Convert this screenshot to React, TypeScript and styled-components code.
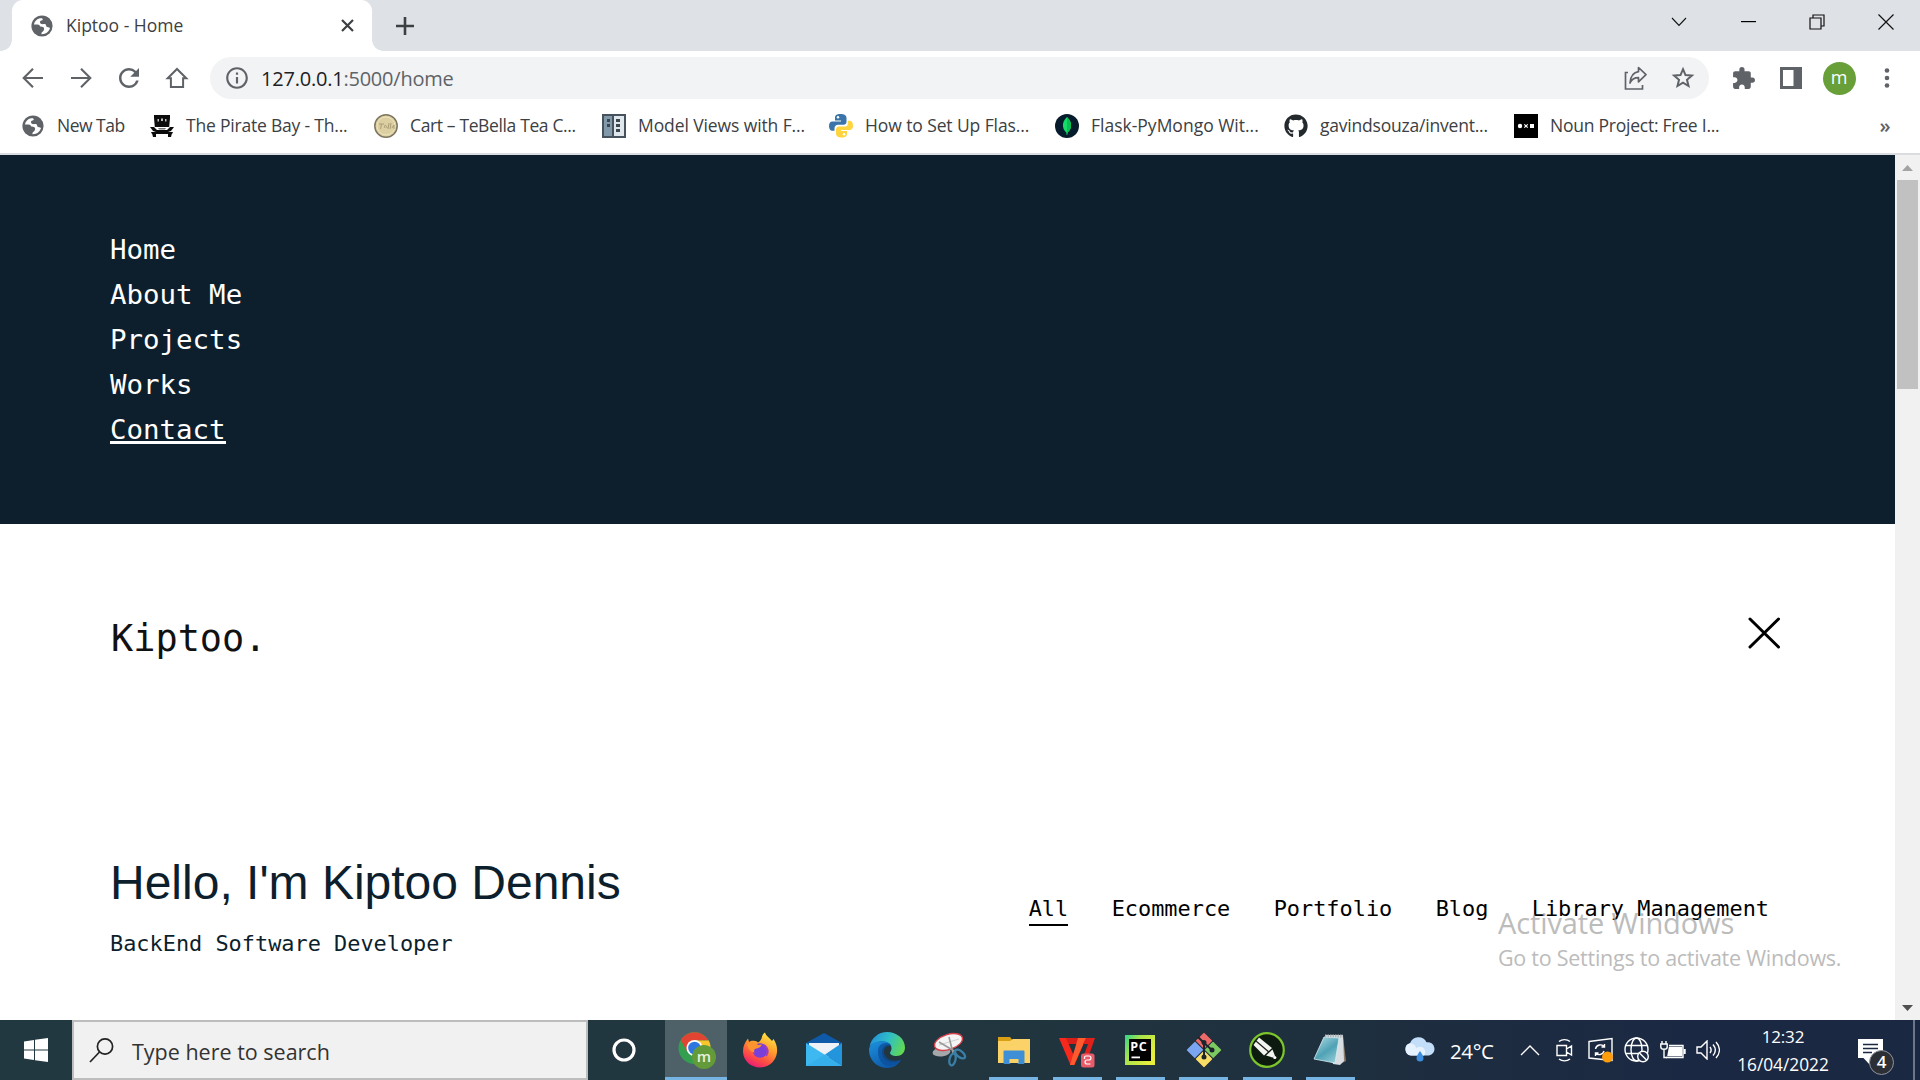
import React from 'react';
import styled, { createGlobalStyle } from 'styled-components';
import { MdRefresh, MdInfoOutline, MdExtension } from 'react-icons/md';
import { FaGithub } from 'react-icons/fa';

const UI = '"Open Sans", "Noto Sans", sans-serif';
const MONO = '"DejaVu Sans Mono", "Liberation Mono", monospace';

const GlobalStyle = createGlobalStyle`
  * { box-sizing: border-box; }
  body { margin: 0; background: #fff; font-family: ${UI}; }
  svg { display: block; flex: none; }
`;

const Screen = styled.div`
  width: 1920px;
  height: 1080px;
  display: flex;
  flex-direction: column;
  overflow: hidden;
  position: relative;
`;

const Label = styled.span<{ $size: number; $ls?: number; $color?: string }>`
  font-size: ${(p) => p.$size}px;
  letter-spacing: ${(p) => p.$ls ?? 0}px;
  color: ${(p) => p.$color ?? '#3c4043'};
  white-space: nowrap;
  line-height: 1.3;
`;

/* ---------- browser chrome ---------- */
const TabStrip = styled.div`
  height: 51px;
  flex: none;
  background: #dee1e6;
  display: flex;
  padding-left: 12px;
`;
const Tab = styled.div`
  width: 360px;
  background: #fff;
  border-radius: 11px 11px 0 0;
  display: flex;
  align-items: center;
  padding: 0 18px;
  position: relative;
  &::before, &::after {
    content: '';
    position: absolute;
    bottom: 0;
    width: 11px;
    height: 11px;
  }
  &::before { left: -11px; background: radial-gradient(circle at 0 0, transparent 10.5px, #fff 11px); }
  &::after { right: -11px; background: radial-gradient(circle at 100% 0, transparent 10.5px, #fff 11px); }
`;
const TabTitle = styled(Label)`
  flex: 1;
  margin-left: 12px;
`;
const NewTab = styled.div`
  width: 66px;
  display: grid;
  place-items: center;
`;
const WindowControls = styled.div`
  margin-left: auto;
  display: flex;
`;
const WinButton = styled.div`
  width: 68.75px;
  height: 44px;
  display: grid;
  place-items: center;
`;
const Toolbar = styled.div`
  height: 54px;
  flex: none;
  background: #fff;
  display: flex;
  align-items: center;
  padding: 0 9px;
`;
const ToolButton = styled.div`
  width: 48px;
  height: 48px;
  display: grid;
  place-items: center;
  color: #5f6368;
`;
const Omnibox = styled.div`
  flex: 1;
  height: 42px;
  margin: 0 10px 0 9px;
  border-radius: 21px;
  background: #f1f3f4;
  display: flex;
  align-items: center;
  padding: 0 2px 0 14px;
  color: #5f6368;
`;
const Url = styled(Label)`
  flex: 1;
  margin-left: 11px;
  padding-top: 2px;
  b { font-weight: 400; color: #202124; }
`;
const Avatar = styled.div`
  width: 33px;
  height: 33px;
  border-radius: 50%;
  background: #689f38;
  color: #fff;
  font-size: 18px;
  line-height: 31px;
  text-align: center;
`;
const Bookmarks = styled.div`
  height: 50px;
  flex: none;
  background: #fff;
  border-bottom: 2px solid #dadce0;
  display: flex;
  align-items: center;
  padding: 0 0 7px 21px;
`;
const Bookmark = styled.div<{ $w: number }>`
  width: ${(p) => p.$w}px;
  display: flex;
  align-items: center;
  gap: 12px;
`;
const IconSlot = styled.div`
  width: 24px;
  height: 24px;
  flex: none;
  display: grid;
  place-items: center;
`;
const More = styled.div`
  margin-left: auto;
  width: 70px;
  text-align: center;
  font-size: 20px;
  font-weight: 600;
  color: #5f6368;
  line-height: 24px;
`;

/* ---------- web page ---------- */
const Viewport = styled.div`
  height: 865px;
  flex: none;
  display: flex;
`;
const Page = styled.div`
  flex: 1;
  background: #fff;
`;
const Menu = styled.nav`
  height: 369px;
  background: #0d1f2d;
  padding: 72px 110px;
  display: flex;
  flex-direction: column;
  align-items: flex-start;
`;
const MenuLink = styled.a<{ $active?: boolean }>`
  font: 27.45px/45px ${MONO};
  color: #fff;
  height: 45px;
  background: ${(p) => (p.$active ? 'linear-gradient(#fff, #fff) 0 34px / 100% 3px no-repeat' : 'none')};
`;
const Header = styled.header`
  display: flex;
  justify-content: space-between;
  align-items: center;
  height: 100px;
  margin: 59px 115px 0 111px;
`;
const Brand = styled.div`
  font: 36.9px/50px ${MONO};
  color: #111;
  padding-top: 11px;
`;
const Hero = styled.section`
  display: flex;
  justify-content: space-between;
  margin: 168px 126px 0 110px;
`;
const Title = styled.h1`
  margin: 0;
  font: 400 48px/64px "Liberation Sans", Arial, sans-serif;
  color: #0d1f2d;
`;
const Subtitle = styled.p`
  margin: 13px 0 0;
  font: 21.9px/32px ${MONO};
  color: #0d1f2d;
`;
const Filters = styled.div`
  display: flex;
  gap: 43.4px;
  padding-top: 42px;
`;
const Filter = styled.a<{ $active?: boolean }>`
  font: 21.9px/32px ${MONO};
  height: 33px;
  color: #000;
  border-bottom: 2px solid ${(p) => (p.$active ? '#000' : 'transparent')};
`;
const ScrollBar = styled.div`
  width: 25px;
  background: #f1f1f1;
  display: flex;
  flex-direction: column;
  align-items: center;
`;
const ScrollArrow = styled.div`
  width: 25px;
  height: 25px;
  display: grid;
  place-items: center;
`;
const ScrollThumb = styled.div`
  width: 21px;
  height: 209px;
  background: #c1c1c1;
  margin-bottom: auto;
`;
const Watermark = styled.div`
  position: absolute;
  left: 1498px;
  top: 904px;
  display: flex;
  flex-direction: column;
  gap: 2px;
  opacity: 0.7;
`;

/* ---------- taskbar ---------- */
const Taskbar = styled.div`
  height: 60px;
  flex: none;
  display: flex;
  background: linear-gradient(90deg, #213841 0%, #21363f 50%, #1e2f3e 70%, #1b2843 88%, #1b2842 100%);
`;
const StartButton = styled.div`
  width: 72px;
  display: grid;
  place-items: center;
`;
const Search = styled.div`
  width: 516px;
  border: 2px solid #bdbdbd;
  background: #f1f1f1;
  display: flex;
  align-items: center;
  gap: 18px;
  padding-left: 15px;
`;
const SearchText = styled(Label)`
  padding-top: 3px;
`;
const Cortana = styled.div`
  width: 72px;
  display: grid;
  place-items: center;
`;
const Apps = styled.div`
  display: flex;
  gap: 1px;
  padding-left: 5px;
`;
const AppButton = styled.div<{ $open?: boolean; $focus?: boolean }>`
  width: 62.3px;
  height: 60px;
  display: grid;
  place-items: center;
  padding-left: 2px;
  background-color: ${(p) => (p.$focus ? '#4e6068' : 'transparent')};
  background-image: ${(p) => (p.$focus || p.$open ? 'linear-gradient(#76b4e3, #76b4e3)' : 'none')};
  background-repeat: no-repeat;
  background-size: ${(p) => (p.$focus ? '100%' : '49px')} 3px;
  background-position: ${(p) => (p.$focus ? '0' : '8px')} 100%;
`;
const Tray = styled.div`
  margin-left: auto;
  display: flex;
  align-items: center;
`;
const Weather = styled.div`
  display: flex;
  align-items: center;
  gap: 15px;
  width: 108px;
`;
const Temperature = styled(Label)`
  padding-top: 2px;
`;
const TrayIcon = styled.div<{ $w: number }>`
  width: ${(p) => p.$w}px;
  display: grid;
  place-items: center;
`;
const Clock = styled.div`
  width: 114px;
  height: 60px;
  display: flex;
  flex-direction: column;
  align-items: center;
  justify-content: space-between;
  padding: 6px 0 4px;
`;
const Notifications = styled.div`
  width: 73px;
  height: 60px;
  position: relative;
  padding: 19px 0 0 18px;
`;
const Badge = styled.div`
  position: absolute;
  left: 29px;
  top: 30px;
  width: 25px;
  height: 25px;
  border-radius: 50%;
  border: 1.5px solid #8f949e;
  background: #2c2f35;
  color: #fff;
  font-size: 17px;
  font-weight: 600;
  line-height: 22px;
  text-align: center;
`;
const ShowDesktop = styled.div`
  width: 7px;
  height: 60px;
  border-left: 2px solid #6d7689;
`;

const GlobeIcon = () => (
  <svg width="24" height="24" viewBox="0 0 24 24">
    <circle cx="12" cy="12" r="10.600" fill="#5f6368" />
    <path d="M10 4.300C6.800 5 4.500 7.400 3.900 10.500h3.600c1.600 0 2.300.8 2.600 2 .9.200 2.800.100 3.600 1 .8 1 .3 2.800-.6 3.700-.8.700-1.600 1-1.600 2v1c4 .2 7.600-2.500 8.500-6.200-1.100-.6-2.900-.4-3.600-1.400-.4-1-.1-2-1-2.400-1-.4-2.600.2-4-.2-1.300-.500-1.800-1.700-1.200-2.700.6-1 2-.9 2.500-1.600.3-.5-.3-1.100-.8-1.500z" fill="#fff" />
  </svg>
);
const ArrowIcon = ({ forward }: { forward?: boolean }) => (
  <svg width="22" height="22" viewBox="0 0 22 22" fill="none" stroke="#5f6368" strokeWidth="2.100">
    <path d={forward ? 'M1 11h19M11 1.700l9.300 9.300-9.300 9.300' : 'M21 11H2M11 1.700L1.700 11l9.300 9.300'} />
  </svg>
);
const StarIcon = () => (
  <svg width="24" height="24" viewBox="0 0 24 24" fill="none" stroke="#5f6368" strokeWidth="2">
    <path d="M12 3.200l2.500 5.900 6.400.5-4.900 4.200 1.500 6.200L12 16.700 6.500 20 8 13.800 3.100 9.600l6.400-.5z" />
  </svg>
);
const PirateIcon = () => (
  <svg width="24" height="24" viewBox="0 0 24 24" fill="#0c0c0c">
    <path d="M4 1h16v3l-.8 9H4.800L4 4zM0 13h4l3 3h10l3-3h4l-3 4-3 1H6l-3-1zM1 18h22l-1 2H2zM2 19h4v4H3zM18 19h4l-1 4h-3z" />
    <path d="M7.500 5H9v2.500H7.500zM11 4.500h2v2.500h-2zM15 5h1.500v2.500H15z" fill="#bdbdbd" />
    <path d="M8 14h8l-1 1.500H9z" fill="#777" />
  </svg>
);
const TeaIcon = () => (
  <svg width="24" height="24" viewBox="0 0 24 24">
    <circle cx="12" cy="12" r="11.200" fill="#dccfa2" stroke="#7d7560" strokeWidth="1.500" />
    <circle cx="12" cy="12" r="9" fill="none" stroke="#efe4bd" />
    <path d="M5 10h5M7.500 10l-1 5M11 14c-2-4 2-3 2 0M15 9l-1 6M17 9l-1 6M18 14l2-3v4" stroke="#ab9d76" fill="none" />
  </svg>
);
const ModelIcon = () => (
  <svg width="24" height="24" viewBox="0 0 24 24">
    <path d="M0 0h24v24H0z" fill="#46535e" />
    <path d="M2 2h8v20H2z" fill="#8199a8" />
    <path d="M12 2h10v20H12z" fill="#dfe6ec" />
    <path d="M5 5h3v3H5zm0 5h3v3H5zM14 5h4v3h-4zm0 5h4v3h-4zm0 5h4v3h-4z" fill="#3a4650" />
  </svg>
);
const PythonIcon = () => (
  <svg width="24" height="24" viewBox="0 0 24 24">
    <path d="M11.500 0C7 0 6 1.600 6 4v2.500h6v1H3.500C1 7.500 0 9.500 0 12s1 4.800 3.300 4.800H5.500v-2.600C5.500 12 7 10.800 9 10.800h5.500c1.700 0 3-1.300 3-3V4c0-2.600-2.300-4-6-4z" fill="#3b74a8" />
    <path d="M12.500 23.500c4.500 0 5.500-1.600 5.500-4V17h-6v-1h8.500c2.500 0 3.500-2 3.500-4.300 0-2.500-1-4.900-3.300-4.900h-1.900v2.600c0 2.200-1.300 3.200-3.300 3.200H10c-1.700 0-3 1.300-3 3v4c0 2.600 1.800 3.900 5.500 3.900z" fill="#ffd43e" />
    <circle cx="9" cy="3.300" r="1.200" fill="#fff" />
    <circle cx="15" cy="20.300" r="1.200" fill="#fff" />
  </svg>
);
const MongoIcon = () => (
  <svg width="24" height="24" viewBox="0 0 24 24">
    <circle cx="12" cy="12" r="12" fill="#061b2b" />
    <path d="M12 3c3 3 4.500 6 4 9.500-.4 3-1.700 4.500-3.300 6L12.300 21h-.6l-.4-2.500c-1.600-1.500-2.900-3-3.300-6C7.500 9 9 6 12 3z" fill="#13dd66" />
    <path d="M12 3c3 3 4.500 6 4 9.500-.4 3-1.700 4.500-3.300 6L12 20z" fill="#0cbd56" />
  </svg>
);
const NounIcon = () => (
  <svg width="24" height="24" viewBox="0 0 24 24">
    <path d="M0 0h24v24H0z" fill="#000" />
    <circle cx="6" cy="12" r="2.200" fill="#fff" />
    <path d="M10.300 10.300l3.400 3.400m0-3.400l-3.400 3.400" stroke="#fff" strokeWidth="1.200" />
    <path d="M16 10h4v4h-4z" fill="#fff" />
  </svg>
);
const HomeIcon = () => (
  <svg width="24" height="24" viewBox="0 0 24 24" fill="none" stroke="#5f6368" strokeWidth="2">
    <path d="M2.700 12.300L12 3l9.300 9.300h-3.200V21H5.900v-8.700z" strokeLinejoin="miter" />
  </svg>
);
const ShareIcon = () => (
  <svg width="26" height="26" viewBox="0 0 26 26" fill="none" stroke="#5f6368" strokeWidth="1.700">
    <path d="M6 7.500H3.500V24h17v-4" />
    <path d="M16.500 2.500l7.500 7.200-7.500 7.200v-4.200c-4.200 0-6.800 1.300-8.500 5.300.5-6.500 3.300-10.500 8.500-11.300z" strokeLinejoin="round" />
  </svg>
);
const PanelIcon = () => (
  <svg width="22" height="22" viewBox="0 0 22 22">
    <path d="M0 0h22v22H0z" fill="#5f6368" />
    <path d="M3 3h10.500v16H3z" fill="#fff" />
  </svg>
);
const DotsIcon = () => (
  <svg width="6" height="20" viewBox="0 0 6 20" fill="#5f6368">
    <circle cx="3" cy="2.500" r="2.300" /><circle cx="3" cy="10" r="2.300" /><circle cx="3" cy="17.500" r="2.300" />
  </svg>
);

const ChromeIcon = () => (
  <svg width="38" height="38" viewBox="0 0 38 38">
    <circle cx="16.500" cy="17" r="16" fill="#34a04f" />
    <path d="M2.700 9A16 16 0 0 1 30.400 9.500H16.500L9.500 21z" fill="#e24434" />
    <path d="M16.500 9.500h14.300A16 16 0 0 1 16.500 33l7-12z" fill="#fbc62c" />
    <circle cx="16.500" cy="17" r="8" fill="#fff" />
    <circle cx="16.500" cy="17" r="6.300" fill="#2e77e0" />
    <circle cx="26" cy="26" r="12" fill="#639a3a" />
    <text x="26" y="31" textAnchor="middle" fontFamily="Open Sans, sans-serif" fontSize="15" fontWeight="600" fill="#e8f0de">m</text>
  </svg>
);
const FirefoxIcon = () => (
  <svg width="36" height="36" viewBox="0 0 36 36">
    <defs>
      <linearGradient id="ffx" x1="0.8" y1="0" x2="0.3" y2="1">
        <stop offset="0" stopColor="#fff04a" /><stop offset=".4" stopColor="#ffa02c" /><stop offset=".75" stopColor="#ff4b45" /><stop offset="1" stopColor="#e81b79" />
      </linearGradient>
    </defs>
    <path d="M23 .5c1 3.500 5 5.500 7 8.500l1.500-2C34 11 35.500 15 35 20c-.8 9-8 15.500-17 15.500S1.500 29 1 20C.8 14.500 3 10 6 6.500l1 3.500c1.500-1 3-1.500 5-1.200 1.500.2 3 .8 4 1.700 2-1 4-3.500 4-6C20.500 3 21.500 1.500 23 .5z" fill="url(#ffx)" />
    <circle cx="18" cy="18.500" r="7.300" fill="#7a3fd8" />
    <path d="M5 12c4-2 8-2 11 1l4-.5c-1 2.500-3 3.500-5.500 4-2.500.5-3 2-2 4-5-1-6.500-4-7.500-8.500z" fill="#ff9330" />
    <path d="M22 13c4 3 5 7 2 11" stroke="#a23bc0" strokeWidth="2" fill="none" />
  </svg>
);
const MailIcon = () => (
  <svg width="36" height="36" viewBox="0 0 36 36">
    <path d="M0 11L18 1l18 10v8H0z" fill="#0e5aa8" />
    <path d="M3 11h30v10L18 27 3 22z" fill="#eef2f6" />
    <path d="M0 11l20 12.500L36 34H0z" fill="#3db8f0" />
    <path d="M36 11L19 22.500 36 34z" fill="#2395dc" />
    <path d="M0 34l19-11.500L36 34z" fill="#35b0ec" />
  </svg>
);
const EdgeIcon = () => (
  <svg width="36" height="36" viewBox="0 0 36 36">
    <defs>
      <linearGradient id="edgeTop" x1="0" y1=".3" x2="1" y2=".6"><stop offset="0" stopColor="#2290dc" /><stop offset=".5" stopColor="#30bfc6" /><stop offset="1" stopColor="#62d851" /></linearGradient>
      <linearGradient id="edgeLow" x1="0" y1="0" x2=".6" y2="1"><stop offset="0" stopColor="#1d92de" /><stop offset="1" stopColor="#0d57a6" /></linearGradient>
    </defs>
    <path d="M.5 15C2 6 9.500 0 18 0c10 0 18 7 18 15.500 0 5-3.700 8.500-8.500 8.500-4 0-6.500-1.500-6.500-3 0-1 1.500-2 1.500-4.500 0-4-4-7-9-7C7 9.500 2 12 .5 15z" fill="url(#edgeTop)" />
    <path d="M0 18c0-5 6-9 13-9 4 0 7 1.500 8.500 4-5-1.500-8.500 2-8.500 7.500 0 8 9 12.500 19 7.500-3 5-8 8-14 8C8 36 0 28 0 18z" fill="url(#edgeLow)" />
    <path d="M9 19c0-5 3.500-8 8-8 3 0 5 1 5.500 3.500-4-1.500-7.500 1-7.500 5 0 7 8 11.500 17 8-4 6-12 7.500-17 5C11 30 9 25 9 19z" fill="#0b4f9c" opacity=".75" />
  </svg>
);
const SnipIcon = () => (
  <svg width="36" height="36" viewBox="0 0 36 36">
    <ellipse cx="9.500" cy="20" rx="9" ry="4.500" fill="#a5a8aa" transform="rotate(-6 9.500 20)" />
    <ellipse cx="16.500" cy="10" rx="14.500" ry="7.500" fill="#f4f4f4" stroke="#d6404b" strokeWidth="1.400" transform="rotate(-18 16.500 10)" />
    <path d="M7 13l20-6" stroke="#cfcfcf" strokeWidth="1" />
    <path d="M7 10l17 10M17 5l4 16" stroke="#9a9a9a" strokeWidth="1.600" />
    <g fill="none" stroke="#3b7fa6" strokeWidth="2.300">
      <ellipse cx="20.500" cy="27.500" rx="3" ry="6" transform="rotate(14 20.500 27.500)" />
      <ellipse cx="28" cy="22" rx="6" ry="3" transform="rotate(38 28 22)" />
    </g>
  </svg>
);
const FolderIcon = () => (
  <svg width="36" height="36" viewBox="0 0 36 36">
    <path d="M2 5h12l2 2.500h17V30H2z" fill="#d9a016" />
    <path d="M2 9h12l3-2h17v24H2z" fill="#fbd267" />
    <path d="M8.500 31V19.500h19V31h-5v-5h-9v5z" fill="#3f8fd6" stroke="#3f8fd6" strokeWidth="2" strokeLinejoin="round" />
    <path d="M13.500 27h9v4h-9z" fill="#fbd267" />
  </svg>
);
const WpsIcon = () => (
  <svg width="38" height="36" viewBox="0 0 38 36">
    <path d="M1 6h31l-3 6H10z" fill="#d81e18" />
    <path d="M1 6h7l8 18 6-18h6L16.500 33h-4z" fill="#f7291d" />
    <path d="M20 6h8L16 33h-4z" fill="#ff5b2e" />
    <path d="M28 6h9l-6 17h-5l4-11h-5z" fill="#e0201a" />
    <rect x="23" y="21.500" width="13.500" height="14" rx="2.500" fill="#e95b68" />
    <path d="M26.500 27v-1.500c0-1 .7-1.500 1.500-1.500h3c2.600 0 2.600 4 0 4h-2c-2.600 0-2.600 4 0 4h3.500" stroke="#fff" strokeWidth="1.200" fill="none" />
  </svg>
);
const PyCharmIcon = () => (
  <svg width="32" height="32" viewBox="0 0 32 32">
    <defs><linearGradient id="pc" x1="0" y1="0" x2="1" y2=".6"><stop offset="0" stopColor="#2cd68b" /><stop offset=".4" stopColor="#a7e34b" /><stop offset="1" stopColor="#e7ef3c" /></linearGradient></defs>
    <path d="M1 1h30v30H1z" fill="url(#pc)" />
    <path d="M5 5h22v22H5z" fill="#000" />
    <text x="6.300" y="16.500" fontFamily="Open Sans, sans-serif" fontSize="12.500" fontWeight="700" fill="#fff" textLength="16.500">PC</text>
    <path d="M7.500 22.500h8.500v1.800H7.500z" fill="#fff" />
  </svg>
);
const GitIcon = () => (
  <svg width="38" height="38" viewBox="0 0 38 38">
    <g stroke="#24303a" strokeWidth="1">
      <rect x="12.500" y="3.500" width="13" height="13" rx="1.500" transform="rotate(45 19 10)" fill="#ee6a6a" />
      <rect x="3.500" y="12.500" width="13" height="13" rx="1.500" transform="rotate(45 10 19)" fill="#7aa5f0" />
      <rect x="21.500" y="12.500" width="13" height="13" rx="1.500" transform="rotate(45 28 19)" fill="#7ccb60" />
      <rect x="12.500" y="21.500" width="13" height="13" rx="1.500" transform="rotate(45 19 28)" fill="#f7dc66" />
    </g>
    <path d="M13 6l6 6v14M19 12l8 7" stroke="#1c252c" strokeWidth="2" fill="none" />
    <circle cx="19" cy="11.500" r="2.500" fill="#1c252c" /><circle cx="19" cy="26" r="2.500" fill="#1c252c" /><circle cx="27" cy="19" r="2.500" fill="#1c252c" />
  </svg>
);
const CorelIcon = () => (
  <svg width="36" height="36" viewBox="0 0 36 36">
    <circle cx="18" cy="18" r="16.800" fill="#0c1a10" stroke="#7cc52c" strokeWidth="2.200" />
    <path d="M10 5.500l13 10.500-8 7.500L4.500 13z" fill="#f2f4f0" />
    <path d="M7 9l14 12" stroke="#222" strokeWidth="1.300" />
    <path d="M23.500 17.500l2.500 6.500-2.500 1.500-6.500-2z" fill="#f2f4f0" />
    <circle cx="25.800" cy="25.500" r="1.600" fill="#fff" />
  </svg>
);
const NotepadIcon = () => (
  <svg width="36" height="36" viewBox="0 0 36 36">
    <defs><linearGradient id="np" x1="0" y1="0" x2=".7" y2="1"><stop offset="0" stopColor="#b6dfe8" /><stop offset=".6" stopColor="#4fa2b5" /><stop offset="1" stopColor="#8bc7d3" /></linearGradient></defs>
    <path d="M31 4l3 25-6 3z" fill="#8b7b6b" />
    <path d="M13 3h18l1 26-4 4-7-1z" fill="#d7dde0" />
    <path d="M12 5l15 1-4 25L2 27z" fill="url(#np)" stroke="#d6eef2" strokeWidth=".8" />
    <path d="M13 4h18" stroke="#aeb6ba" strokeWidth="3" strokeDasharray="1.500 1" />
  </svg>
);
const CloudIcon = () => (
  <svg width="31" height="26" viewBox="0 0 31 26">
    <path d="M7 18.500A6.300 6.300 0 0 1 6 6.200 9 9 0 0 1 22.500 5.300 6.700 6.700 0 0 1 25 18.500z" fill="#c3def9" />
    <path d="M7 18.500A6.300 6.300 0 0 1 6 6.200c4 .3 6 2.800 6 5.300a5 5 0 0 1 8 7z" fill="#e6f3ff" />
    <path d="M16 14c2 3 3.500 5 3.500 7a3.500 3.500 0 0 1-7 0c0-2 1.500-4 3.500-7z" fill="#3d8ede" />
  </svg>
);

const bookmarks: { text: string; w: number; ls: number; icon: React.ReactNode }[] = [
  { text: 'New Tab', w: 129, ls: -0.5, icon: <GlobeIcon /> },
  { text: 'The Pirate Bay - Th...', w: 224, ls: -0.2, icon: <PirateIcon /> },
  { text: 'Cart – TeBella Tea C...', w: 228, ls: -0.37, icon: <TeaIcon /> },
  { text: 'Model Views with F...', w: 227, ls: -0.1, icon: <ModelIcon /> },
  { text: 'How to Set Up Flas...', w: 226, ls: -0.1, icon: <PythonIcon /> },
  { text: 'Flask-PyMongo Wit...', w: 229, ls: 0, icon: <MongoIcon /> },
  { text: 'gavindsouza/invent...', w: 230, ls: -0.21, icon: <FaGithub size={24} color="#24292e" /> },
  { text: 'Noun Project: Free I...', w: 220, ls: -0.24, icon: <NounIcon /> },
];
const apps: { name: string; icon: React.ReactNode; open?: boolean; focus?: boolean }[] = [
  { name: 'chrome', icon: <ChromeIcon />, focus: true },
  { name: 'firefox', icon: <FirefoxIcon /> },
  { name: 'mail', icon: <MailIcon /> },
  { name: 'edge', icon: <EdgeIcon /> },
  { name: 'snip', icon: <SnipIcon /> },
  { name: 'files', icon: <FolderIcon />, open: true },
  { name: 'wps', icon: <WpsIcon />, open: true },
  { name: 'pycharm', icon: <PyCharmIcon />, open: true },
  { name: 'git', icon: <GitIcon />, open: true },
  { name: 'corel', icon: <CorelIcon />, open: true },
  { name: 'notepad', icon: <NotepadIcon />, open: true },
];
const line = { fill: 'none', stroke: '#fff', strokeWidth: 1.4 };

export default function App() {
  return (
    <Screen>
      <GlobalStyle />
      <TabStrip>
        <Tab>
          <GlobeIcon />
          <TabTitle $size={17.5}>Kiptoo - Home</TabTitle>
          <svg width="13" height="13" viewBox="0 0 13 13" stroke="#3c4043" strokeWidth="2.200"><path d="M1 1l11 11M12 1L1 12" /></svg>
        </Tab>
        <NewTab>
          <svg width="18" height="18" viewBox="0 0 18 18" stroke="#3c4043" strokeWidth="2.600"><path d="M9 0v18M0 9h18" /></svg>
        </NewTab>
        <WindowControls>
          <WinButton><svg width="16" height="10" viewBox="0 0 16 10" fill="none" stroke="#111" strokeWidth="1.100"><path d="M1 1l7 7.500L15 1" /></svg></WinButton>
          <WinButton><svg width="15" height="2" viewBox="0 0 15 2"><path d="M0 0h15v1.200H0z" /></svg></WinButton>
          <WinButton><svg width="16" height="16" viewBox="0 0 16 16" fill="none" stroke="#111" strokeWidth="1.200"><path d="M1 4h11v11H1zM4 4V1h11v11h-3" /></svg></WinButton>
          <WinButton><svg width="16" height="16" viewBox="0 0 16 16" stroke="#111" strokeWidth="1.200"><path d="M.5.5l15 15M15.500.5l-15 15" /></svg></WinButton>
        </WindowControls>
      </TabStrip>

      <Toolbar>
        <ToolButton><ArrowIcon /></ToolButton>
        <ToolButton><ArrowIcon forward /></ToolButton>
        <ToolButton><MdRefresh size={30} /></ToolButton>
        <ToolButton><HomeIcon /></ToolButton>
        <Omnibox>
          <MdInfoOutline size={26} />
          <Url $size={20} $ls={-0.22} $color="#5f6368"><b>127.0.0.1</b>:5000/home</Url>
          <ToolButton><ShareIcon /></ToolButton>
          <ToolButton><StarIcon /></ToolButton>
        </Omnibox>
        <ToolButton><MdExtension size={25} /></ToolButton>
        <ToolButton><PanelIcon /></ToolButton>
        <ToolButton><Avatar>m</Avatar></ToolButton>
        <ToolButton><DotsIcon /></ToolButton>
      </Toolbar>

      <Bookmarks>
        {bookmarks.map((b) => (
          <Bookmark key={b.text} $w={b.w}>
            <IconSlot>{b.icon}</IconSlot>
            <Label $size={17.5} $ls={b.ls}>{b.text}</Label>
          </Bookmark>
        ))}
        <More>»</More>
      </Bookmarks>

      <Viewport>
        <Page>
          <Menu>
            <MenuLink>Home</MenuLink>
            <MenuLink>About Me</MenuLink>
            <MenuLink>Projects</MenuLink>
            <MenuLink>Works</MenuLink>
            <MenuLink $active>Contact</MenuLink>
          </Menu>
          <Header>
            <Brand>Kiptoo.</Brand>
            <svg width="32" height="32" viewBox="0 0 32 32" stroke="#000" strokeWidth="3" strokeLinecap="round"><path d="M2 2l28.500 28M30.500 2L2 30" /></svg>
          </Header>
          <Hero>
            <div>
              <Title>Hello, I'm Kiptoo Dennis</Title>
              <Subtitle>BackEnd Software Developer</Subtitle>
            </div>
            <Filters>
              <Filter $active>All</Filter>
              <Filter>Ecommerce</Filter>
              <Filter>Portfolio</Filter>
              <Filter>Blog</Filter>
              <Filter>Library Management</Filter>
            </Filters>
          </Hero>
        </Page>
        <ScrollBar>
          <ScrollArrow><svg width="11" height="6" viewBox="0 0 11 6"><path d="M0 6l5.500-6L11 6z" fill="#a3a3a3" /></svg></ScrollArrow>
          <ScrollThumb />
          <ScrollArrow><svg width="11" height="6" viewBox="0 0 11 6"><path d="M0 0l5.500 6L11 0z" fill="#505050" /></svg></ScrollArrow>
        </ScrollBar>
      </Viewport>

      <Watermark>
        <Label $size={29} $ls={-0.12} $color="#a0a0a0">Activate Windows</Label>
        <Label $size={21.5} $ls={-0.26} $color="#a0a0a0">Go to Settings to activate Windows.</Label>
      </Watermark>

      <Taskbar>
        <StartButton>
          <svg width="24" height="24" viewBox="0 0 24 24" fill="#fff"><path d="M0 3.400l10-1.400v9.500H0zM11 1.800L24 0v11.500H11zM0 12.500h10V22L0 20.600zM11 12.500h13V24l-13-1.800z" /></svg>
        </StartButton>
        <Search>
          <svg width="25" height="25" viewBox="0 0 25 25" fill="none" stroke="#222" strokeWidth="1.700"><circle cx="16" cy="8.500" r="7.600" /><path d="M10.500 14L1 24" /></svg>
          <SearchText $size={21.5} $color="#333">Type here to search</SearchText>
        </Search>
        <Cortana>
          <svg width="26" height="26" viewBox="0 0 26 26"><circle cx="13" cy="13" r="10" fill="none" stroke="#fff" strokeWidth="3.200" /></svg>
        </Cortana>
        <Apps>
          {apps.map((a) => (
            <AppButton key={a.name} $open={a.open} $focus={a.focus}>{a.icon}</AppButton>
          ))}
        </Apps>
        <Tray>
          <Weather>
            <CloudIcon />
            <Temperature $size={20.5} $ls={-0.4} $color="#fff">24°C</Temperature>
          </Weather>
          <TrayIcon $w={35}><svg width="20" height="12" viewBox="0 0 20 12" {...line}><path d="M1 11l9-9 9 9" /></svg></TrayIcon>
          <TrayIcon $w={36}>
            <svg width="18" height="24" viewBox="0 0 18 24" {...line}><path d="M1 7.500h9.500v10H1zM10.500 11l5-3v9l-5-3M3 3.500c3-2.500 8-2.500 11 0M3 21c3 2.500 8 2.500 11 0" /></svg>
          </TrayIcon>
          <TrayIcon $w={35}>
            <svg width="26" height="26" viewBox="0 0 26 26" {...line}>
              <path d="M1 4.500l23-3v22l-23-2.500z" />
              <path d="M7.500 12a5 5 0 0 1 9-2m0-3v3h-3M16 14a5 5 0 0 1-8.500 2m0 3v-3h3" />
              <circle cx="19.500" cy="20" r="5.500" fill="#ff9d0a" stroke="none" />
            </svg>
          </TrayIcon>
          <TrayIcon $w={37}>
            <svg width="26" height="26" viewBox="0 0 26 26" {...line}>
              <circle cx="12.500" cy="12.500" r="11.500" /><ellipse cx="12.500" cy="12.500" rx="5.500" ry="11.500" /><path d="M2 8.500h21M2 16.500h21" />
              <circle cx="19" cy="19.500" r="5.300" fill="#1c2a43" /><path d="M15.500 16l7 7" />
            </svg>
          </TrayIcon>
          <TrayIcon $w={35}>
            <svg width="26" height="18" viewBox="0 0 26 18" {...line}>
              <path d="M9 4.500h14v12H6" /><path d="M9.500 6.500h12v8H8z" fill="#fff" /><path d="M24.700 8v5" strokeWidth="2" />
              <path d="M2 0v3M6 0v3M.8 3h6.400v3c0 3-6.400 3-6.400 0zM4 8v8.500h3" />
            </svg>
          </TrayIcon>
          <TrayIcon $w={36}>
            <svg width="24" height="20" viewBox="0 0 24 20" {...line}><path d="M1 7h4l6-6v18l-6-6H1zM14 7c1.500 2 1.500 4 0 6M17 4.500c3 3.500 3 7.500 0 11M20 2c4.500 5 4.500 11 0 16" /></svg>
          </TrayIcon>
          <Clock>
            <Label $size={17} $ls={-0.2} $color="#fff">12:32</Label>
            <Label $size={17.3} $color="#fff">16/04/2022</Label>
          </Clock>
          <Notifications>
            <svg width="25" height="27" viewBox="0 0 25 27"><path d="M0 0h25v19H12v7l-6.500-7H0z" fill="#fff" /><path d="M5 5.500h15M5 9.500h15M5 13.500h9" stroke="#1b2842" strokeWidth="1.400" /></svg>
            <Badge>4</Badge>
          </Notifications>
          <ShowDesktop />
        </Tray>
      </Taskbar>
    </Screen>
  );
}
